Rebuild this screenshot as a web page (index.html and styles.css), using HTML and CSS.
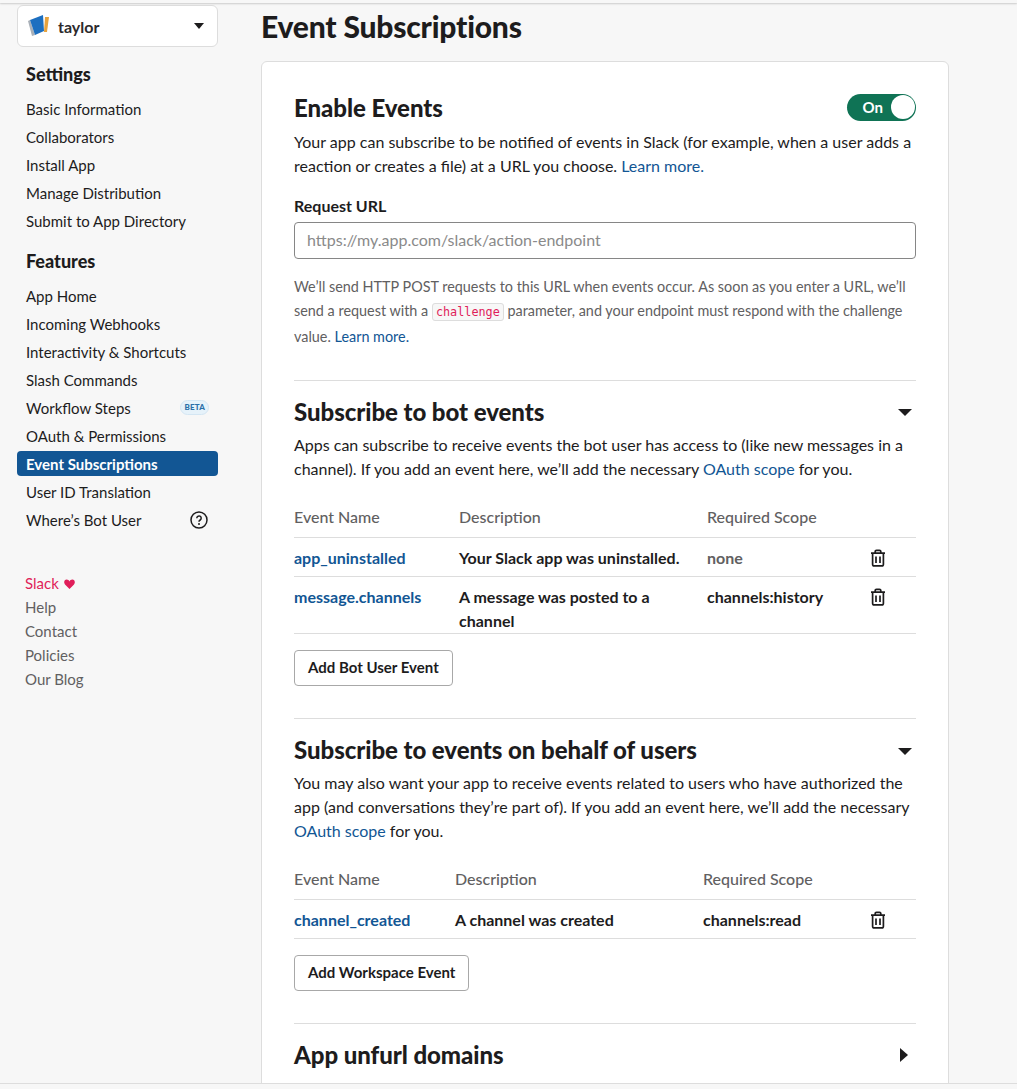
FILE: index.html
```html
<!DOCTYPE html>
<html lang="en">
<head>
  <meta charset="UTF-8">
  <title>Event Subscriptions</title>
  <link rel="stylesheet" href="styles.css">
</head>
<body>
  <div class="top-strip"></div>
  <div class="page">
    <aside class="sidebar">
      <div class="app-switcher">
        <svg class="app-icon" width="22" height="22" viewBox="0 0 22 22">
          <path d="M0 6 L2 5 L7 20 L4 21Z" fill="#a9b0b8"/>
          <path d="M2 5 L15 0 L16 16 L7 20Z" fill="#1d6fc0"/>
          <path d="M17 2 L21 2 L19 17 L16 17Z" fill="#e8a33d"/>
        </svg>
        <span class="app-name">taylor</span>
        <span class="caret-down"></span>
      </div>

      <h3 class="nav-title">Settings</h3>
      <a class="nav-item">Basic Information</a>
      <a class="nav-item">Collaborators</a>
      <a class="nav-item">Install App</a>
      <a class="nav-item">Manage Distribution</a>
      <a class="nav-item">Submit to App Directory</a>

      <h3 class="nav-title features">Features</h3>
      <a class="nav-item">App Home</a>
      <a class="nav-item">Incoming Webhooks</a>
      <a class="nav-item">Interactivity &amp; Shortcuts</a>
      <a class="nav-item">Slash Commands</a>
      <a class="nav-item">Workflow Steps <span class="beta">BETA</span></a>
      <a class="nav-item">OAuth &amp; Permissions</a>
      <a class="nav-item active">Event Subscriptions</a>
      <a class="nav-item">User ID Translation</a>
      <a class="nav-item">Where’s Bot User
        <svg class="help-icon" width="18" height="18" viewBox="0 0 18 18">
          <circle cx="9" cy="9" r="8" fill="none" stroke="#1d1c1d" stroke-width="1.5"/>
          <path d="M6.800 7.200a2.200 2.200 0 1 1 3.400 1.800c-.8.5-1.200.9-1.200 1.700" fill="none" stroke="#1d1c1d" stroke-width="1.5"/>
          <circle cx="9" cy="13" r="1" fill="#1d1c1d"/>
        </svg>
      </a>

      <div class="side-footer">
        <a class="foot-link slack">Slack <svg class="heart" width="11" height="10" viewBox="0 0 11 10"><path d="M5.500 10 L1 5.400C-.6 3.700.2.6 2.700.6c1.300 0 2.200.8 2.800 1.800C6.100 1.400 7 .6 8.300.6c2.500 0 3.300 3.100 1.700 4.800Z" fill="#e01e5a"/></svg></a>
        <a class="foot-link">Help</a>
        <a class="foot-link">Contact</a>
        <a class="foot-link">Policies</a>
        <a class="foot-link">Our Blog</a>
      </div>
    </aside>

    <main class="main">
      <h1>Event Subscriptions</h1>
      <div class="card">
        <section class="enable">
          <div class="section-head">
            <h2>Enable Events</h2>
            <div class="toggle"><span>On</span><i></i></div>
          </div>
          <p class="lead">Your app can subscribe to be notified of events in Slack (for example, when a user adds a reaction or creates a file) at a URL you choose. <a>Learn more.</a></p>
          <label class="field-label">Request URL</label>
          <input class="url-input" type="text" placeholder="https://my.app.com/slack/action-endpoint">
          <p class="hint">We’ll send HTTP POST requests to this URL when events occur. As soon as you enter a URL, we’ll send a request with a <code>challenge</code> parameter, and your endpoint must respond with the challenge value. <a>Learn more.</a></p>
        </section>

        <section class="block">
          <div class="section-head">
            <h2>Subscribe to bot events</h2>
            <span class="caret-down big"></span>
          </div>
          <p class="lead">Apps can subscribe to receive events the bot user has access to (like new messages in a channel). If you add an event here, we’ll add the necessary <a>OAuth scope</a> for you.</p>
          <table class="events bot">
            <tr><th class="c-name">Event Name</th><th class="c-desc">Description</th><th class="c-scope">Required Scope</th><th></th></tr>
            <tr>
              <td><a>app_uninstalled</a></td>
              <td>Your Slack app was uninstalled.</td>
              <td class="muted">none</td>
              <td class="c-trash"><svg width="16" height="18" viewBox="0 0 16 18"><use href="#trash"/></svg></td>
            </tr>
            <tr class="tall">
              <td><a>message.channels</a></td>
              <td>A message was posted to a channel</td>
              <td>channels:history</td>
              <td class="c-trash"><svg width="16" height="18" viewBox="0 0 16 18"><use href="#trash"/></svg></td>
            </tr>
          </table>
          <button class="btn">Add Bot User Event</button>
        </section>

        <section class="block">
          <div class="section-head">
            <h2>Subscribe to events on behalf of users</h2>
            <span class="caret-down big"></span>
          </div>
          <p class="lead">You may also want your app to receive events related to users who have authorized the app (and conversations they’re part of). If you add an event here, we’ll add the necessary <a>OAuth scope</a> for you.</p>
          <table class="events user">
            <tr><th class="c-name">Event Name</th><th class="c-desc">Description</th><th class="c-scope">Required Scope</th><th></th></tr>
            <tr>
              <td><a>channel_created</a></td>
              <td>A channel was created</td>
              <td>channels:read</td>
              <td class="c-trash"><svg width="16" height="18" viewBox="0 0 16 18"><use href="#trash"/></svg></td>
            </tr>
          </table>
          <button class="btn">Add Workspace Event</button>
        </section>

        <section class="block">
          <div class="section-head">
            <h2>App unfurl domains</h2>
            <span class="caret-right"></span>
          </div>
        </section>
      </div>
    </main>
  </div>
  <div class="bottom-strip"></div>

  <svg class="defs" width="0" height="0">
    <symbol id="trash" viewBox="0 0 16 18">
      <path d="M1 4.200h14M5.200 4V2.600c0-.8.5-1.300 1.300-1.300h3c.8 0 1.300.5 1.300 1.300V4M2.600 4.400v10.800c0 1 .7 1.700 1.700 1.700h7.400c1 0 1.700-.7 1.700-1.700V4.400M6 7.500v6.500M10 7.500v6.500" fill="none" stroke="#1d1c1d" stroke-width="1.700"/>
    </symbol>
  </svg>
</body>
</html>
```

FILE: styles.css
```css
* {
  box-sizing: border-box;
}

html, body {
  margin: 0;
  height: 1089px;
  overflow: hidden;
}

body {
  font-family: Lato, "Open Sans", sans-serif;
  font-size: 15px;
  color: #1d1c1d;
  background: #f7f7f7;
}

a {
  color: #125694;
  text-decoration: none;
}

.top-strip {
  height: 3px;
  background: #f7f7f7;
  box-shadow: 0 1px 2px rgba(0,0,0,0.18);
}

.bottom-strip {
  height: 6px;
  background: #f7f7f7;
  border-top: 1px solid #dddddd;
}

.defs {
  position: absolute;
}

.page {
  display: flex;
  height: 1080px;
  overflow: hidden;
}

/* sidebar */
.sidebar {
  width: 261px;
  flex: none;
  padding: 2px 43px 0 17px;
}

.app-switcher {
  display: flex;
  align-items: center;
  height: 42px;
  padding: 0 13px 0 10px;
  background: #fff;
  border: 1px solid #dddddd;
  border-radius: 6px;
}

.app-icon {
  margin-right: 8px;
}

.app-name {
  flex: 1;
  font-size: 16px;
  font-weight: 700;
  color: #2c2a2c;
}

.caret-down {
  display: block;
  width: 0;
  height: 0;
  border-left: 5px solid transparent;
  border-right: 5px solid transparent;
  border-top: 6px solid #1d1c1d;
}

.caret-down.big {
  border-left-width: 7.5px;
  border-right-width: 7.5px;
  border-top-width: 7px;
  margin: 2px 4px 0 0;
}

.caret-right {
  display: block;
  width: 0;
  height: 0;
  border-top: 7px solid transparent;
  border-bottom: 7px solid transparent;
  border-left: 8px solid #1d1c1d;
  margin-right: 8px;
}

.nav-title {
  margin: 14px 0 9px 9px;
  font-size: 18px;
  line-height: 26px;
  font-weight: 900;
}

.nav-title.features {
  margin-top: 15px;
}

.nav-item {
  display: flex;
  align-items: center;
  justify-content: space-between;
  height: 25px;
  margin-bottom: 3px;
  padding: 0 10px 0 9px;
  font-size: 15px;
  color: #1d1c1d;
  border-radius: 4px;
}

.nav-item.active {
  background: #125694;
  color: #fff;
  font-weight: 700;
}

.beta {
  margin-right: -1px;
  padding: 0 3px;
  font-size: 8px;
  line-height: 13px;
  font-weight: 900;
  letter-spacing: 0.2px;
  color: #2a6fa8;
  background: #e6f2fa;
  border: 1px solid #d4e6f3;
  border-radius: 8px;
}

.help-icon {
  display: block;
}

.side-footer {
  margin-top: 39px;
  padding-left: 8px;
}

.foot-link {
  display: block;
  font-size: 15px;
  line-height: 24px;
  color: #616061;
}

.foot-link.slack {
  color: #e01e5a;
}

.heart {
  margin-left: 1px;
}

/* main column */
.main {
  width: 688px;
  flex: none;
}

h1 {
  margin: 0;
  height: 58px;
  font-size: 30px;
  line-height: 46px;
  font-weight: 900;
  letter-spacing: -0.2px;
}

.card {
  padding: 30px 32px 0;
  height: 1100px;
  background: #fff;
  border: 1px solid #dddddd;
  border-radius: 6px;
}

.section-head {
  display: flex;
  align-items: center;
  justify-content: space-between;
  height: 32px;
}

h2 {
  margin: 0;
  font-size: 24px;
  line-height: 32px;
  font-weight: 900;
  letter-spacing: -0.06px;
}

.toggle {
  display: flex;
  align-items: center;
  justify-content: flex-end;
  gap: 8px;
  width: 69px;
  height: 27px;
  margin-bottom: 2px;
  padding: 0 1px;
  background: #0f7355;
  border-radius: 14px;
  color: #fff;
  font-size: 15px;
  font-weight: 700;
}

.toggle i {
  display: block;
  width: 24px;
  height: 24px;
  background: #fff;
  border-radius: 50%;
}

.lead {
  margin: 5px 0 0;
  font-size: 16px;
  line-height: 24px;
}

.enable .lead {
  margin-top: 6px;
}

.field-label {
  display: block;
  margin-top: 16px;
  font-size: 16px;
  line-height: 24px;
  font-weight: 700;
}

.url-input {
  display: block;
  width: 100%;
  height: 37px;
  margin-top: 4px;
  padding: 0 12px 2px;
  font-family: inherit;
  font-size: 16px;
  background: #fff;
  border: 1px solid #868686;
  border-radius: 4px;
}

.url-input::placeholder {
  color: #8a8a8a;
}

.hint {
  margin: 16px 0 0;
  font-size: 14.4px;
  line-height: 24.25px;
  color: #616061;
}

code {
  padding: 1px 3px;
  font-family: "DejaVu Sans Mono", monospace;
  font-size: 11.8px;
  color: #e01e5a;
  background: #f7f7f7;
  border: 1px solid #dddddd;
  border-radius: 3px;
}

.block {
  margin-top: 31px;
  padding-top: 15px;
  border-top: 1px solid #dddddd;
}

.block + .block {
  margin-top: 32px;
}

.events {
  width: 100%;
  margin-top: 17px;
  border-collapse: collapse;
  table-layout: fixed;
  font-size: 16px;
}

.events.user {
  margin-top: 16px;
}

.events th {
  height: 40px;
  padding: 0 0 2px;
  text-align: left;
  font-weight: 500;
  color: #616061;
  border-bottom: 1px solid #dddddd;
}

.events td {
  height: 39px;
  padding: 2px 0 0;
  font-weight: 700;
  line-height: 24px;
  border-bottom: 1px solid #dddddd;
}

.events .tall td {
  height: 57px;
  padding-top: 8px;
  vertical-align: top;
}

.events .tall .c-trash svg {
  margin-top: 3px;
}

.events .muted {
  color: #616061;
}

.bot .c-name { width: 165px; }
.bot .c-desc { width: 248px; }
.bot .c-scope { width: 163px; }

.user .c-name { width: 161px; }
.user .c-desc { width: 248px; }
.user .c-scope { width: 167px; }

.c-trash svg {
  display: block;
}

.btn {
  display: block;
  height: 36px;
  margin-top: 16px;
  padding: 0 13px 2px;
  font-family: inherit;
  font-size: 15px;
  font-weight: 700;
  color: #1d1c1d;
  background: #fff;
  border: 1px solid #a8a8a8;
  border-radius: 4px;
}
```
